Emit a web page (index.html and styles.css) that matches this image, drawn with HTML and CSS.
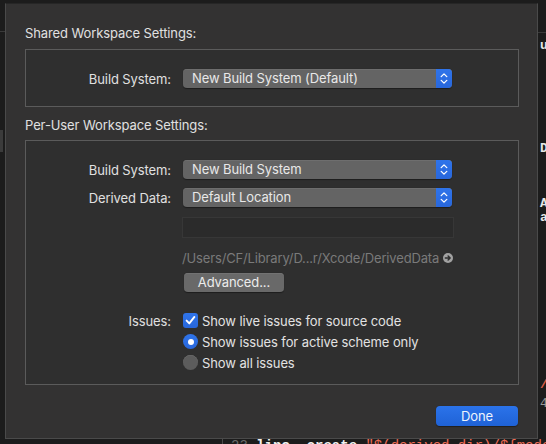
FILE: index.html
```html
<!DOCTYPE html>
<html>
<head>
<meta charset="utf-8">
<link rel="stylesheet" href="styles.css">
</head>
<body>
<div class="backdrop">
  <div class="bd-line bd-line-left"></div>
  <div class="bd-line bd-line-right"></div>
  <div class="bd-block"></div>
  <div class="bd-frag bd-ui">ui</div>
  <div class="bd-frag bd-d">D</div>
  <div class="bd-frag bd-a">A</div>
  <div class="bd-frag bd-a2">a</div>
  <div class="bd-frag bd-slash">/</div>
  <div class="bd-frag bd-four">4</div>
  <div class="bd-code"><span class="c-num">23</span> <span class="c-w">lipo</span> <span class="c-w">-create</span> <span class="c-r">"$(derived_dir)/${model}/</span></div>
</div>

<div class="sheet">
  <div class="title">Shared Workspace Settings:</div>
  <div class="box box-shared">
    <div class="row">
      <div class="label">Build System:</div>
      <div class="popup">
        <span class="popup-text">New Build System (Default)</span>
        <span class="stepper"><svg width="16" height="19" viewBox="0 0 16 19"><path d="M5.2 7.6 L8 4.9 L10.8 7.6 M5.2 11.4 L8 14.1 L10.8 11.4" fill="none" stroke="#fff" stroke-width="1.3" stroke-linecap="round" stroke-linejoin="round"/></svg></span>
      </div>
    </div>
  </div>

  <div class="title title-user">Per-User Workspace Settings:</div>
  <div class="box box-user">
    <div class="row">
      <div class="label">Build System:</div>
      <div class="popup">
        <span class="popup-text">New Build System</span>
        <span class="stepper"><svg width="16" height="19" viewBox="0 0 16 19"><path d="M5.2 7.6 L8 4.9 L10.8 7.6 M5.2 11.4 L8 14.1 L10.8 11.4" fill="none" stroke="#fff" stroke-width="1.3" stroke-linecap="round" stroke-linejoin="round"/></svg></span>
      </div>
    </div>
    <div class="row row-derived">
      <div class="label">Derived Data:</div>
      <div class="popup">
        <span class="popup-text">Default Location</span>
        <span class="stepper"><svg width="16" height="19" viewBox="0 0 16 19"><path d="M5.2 7.6 L8 4.9 L10.8 7.6 M5.2 11.4 L8 14.1 L10.8 11.4" fill="none" stroke="#fff" stroke-width="1.3" stroke-linecap="round" stroke-linejoin="round"/></svg></span>
      </div>
    </div>
    <div class="indent">
      <div class="field"></div>
      <div class="path">
        <span class="path-text">/Users/CF/Library/D...r/Xcode/DerivedData</span>
        <svg class="path-arrow" width="10" height="10" viewBox="0 0 10 10"><circle cx="5" cy="5" r="5" fill="#a2a2a2"/><path d="M2.3 5 H7.2 M5.1 2.9 L7.2 5 L5.1 7.1" fill="none" stroke="#2e2e2e" stroke-width="1.4" stroke-linecap="round" stroke-linejoin="round"/></svg>
      </div>
      <div class="button-adv">Advanced...</div>
    </div>
    <div class="row row-issues">
      <div class="label">Issues:</div>
      <div class="option">
        <span class="checkbox"><svg width="15" height="15" viewBox="0 0 15 15"><path d="M3.6 7.6 L6.3 10.4 L11.4 3.9" fill="none" stroke="#fff" stroke-width="1.9" stroke-linecap="round" stroke-linejoin="round"/></svg></span>
        <span class="opt-text">Show live issues for source code</span>
      </div>
    </div>
    <div class="row row-radio">
      <div class="label"></div>
      <div class="option">
        <span class="radio radio-on"><span class="dot"></span></span>
        <span class="opt-text">Show issues for active scheme only</span>
      </div>
    </div>
    <div class="row row-radio">
      <div class="label"></div>
      <div class="option">
        <span class="radio radio-off"></span>
        <span class="opt-text">Show all issues</span>
      </div>
    </div>
  </div>

  <div class="footer">
    <div class="button-done">Done</div>
  </div>
</div>
</body>
</html>
```

FILE: styles.css
```css
* { box-sizing: border-box; }

html, body {
  margin: 0;
  padding: 0;
}

body {
  width: 546px;
  height: 444px;
  overflow: hidden;
  background: #1c1c1c;
  font-family: "Inter", "Noto Sans", sans-serif;
  font-size: 13px;
  line-height: 16px;
  color: #e0e0e0;
  position: relative;
  padding: 3px 0 0 5px;
}

/* backdrop: the editor behind the sheet */
.backdrop {
  position: absolute;
  left: 0;
  top: 0;
  width: 546px;
  height: 444px;
  z-index: 0;
  overflow: hidden;
}
.bd-line {
  position: absolute;
  height: 1px;
  background: #3a3a3a;
}
.bd-line-left { left: 0; top: 31px; width: 5px; }
.bd-line-right { left: 538px; top: 32px; width: 8px; }
.bd-block {
  position: absolute;
  left: 0;
  top: 130px;
  width: 3px;
  height: 22px;
  background: #3b3b3b;
}
.bd-frag {
  position: absolute;
  font-family: "Liberation Mono", monospace;
  font-size: 13px;
  line-height: 16px;
  color: #e6e6e6;
  font-weight: bold;
}
.bd-ui { left: 540px; top: 38px; }
.bd-d { left: 540px; top: 141px; }
.bd-a { left: 540px; top: 196px; }
.bd-a2 { left: 540px; top: 210px; }
.bd-slash { left: 540px; top: 377px; color: #e0604a; }
.bd-four { left: 540px; top: 396px; color: #9a9a9a; font-weight: normal; }
.bd-code {
  position: absolute;
  left: 222px;
  top: 438px;
  font-family: "Liberation Mono", monospace;
  font-size: 14px;
  line-height: 16px;
  white-space: nowrap;
  border-left: 1px solid #4a4a4a;
  padding-left: 8px;
}
.c-num { color: #6a6a6a; }
.c-w { color: #f0f0f0; font-weight: bold; }
.c-r { color: #ef6b55; }

/* sheet */
.sheet {
  position: relative;
  z-index: 1;
  width: 533px;
  height: 436px;
  background: #333232;
  border: 1px solid #4a4a4a;
  border-top-color: #262626;
  padding: 21px 18px 0 19px;
}

.title {
  height: 16px;
  color: #e0e0e0;
  letter-spacing: -0.1px;
}
.title-user { margin-top: 10px; }

.box {
  margin-top: 8px;
  width: 494px;
  border: 1px solid #5b5b5b;
  background: #2f2f2f;
}
.title-user + .box { margin-top: 7px; }
.box-shared {
  height: 58px;
  padding-top: 19px;
}
.box-user {
  height: 245px;
  padding-top: 19px;
}

.row {
  display: flex;
  align-items: center;
}
.label {
  width: 145px;
  margin-right: 12px;
  text-align: right;
  color: #e0e0e0;
  letter-spacing: -0.1px;
}
.row-derived { margin-top: 9px; }

.popup {
  display: flex;
  width: 269px;
  height: 19px;
  border-radius: 4px;
  background: #646464;
  box-shadow: inset 0 0.5px 0 #787878, 0 0.5px 1px rgba(0,0,0,0.4);
}
.popup-text {
  flex: 1;
  padding-left: 9px;
  line-height: 19px;
  color: #e8e8e8;
  letter-spacing: -0.1px;
  white-space: nowrap;
}
.stepper {
  width: 16px;
  height: 19px;
  border-radius: 0 4px 4px 0;
  background: linear-gradient(#2f74ea, #2867dc);
  display: block;
}
.stepper svg { display: block; }

.indent {
  margin-left: 157px;
}
.field {
  margin-top: 10px;
  margin-left: -1px;
  width: 272px;
  height: 21px;
  background: #2b2b2b;
  border: 1px solid #373737;
}
.path {
  margin-top: 12px;
  margin-left: -1px;
  height: 16px;
  display: flex;
  align-items: center;
  width: 272px;
}
.path-text {
  color: #7a7a7a;
  letter-spacing: -0.15px;
  white-space: nowrap;
}
.path-arrow {
  margin-left: 4px;
  display: block;
}
.button-adv {
  margin-top: 7px;
  margin-left: 1px;
  width: 100px;
  height: 19px;
  border-radius: 4px;
  background: #696969;
  box-shadow: inset 0 0.5px 0 #7c7c7c, 0 0.5px 1px rgba(0,0,0,0.4);
  color: #ececec;
  text-align: center;
  line-height: 19px;
  letter-spacing: -0.1px;
}

.row-issues { margin-top: 18px; height: 21px; }
.row-radio { height: 21px; }

.option {
  display: flex;
  align-items: center;
}
.opt-text {
  margin-left: 4px;
  color: #e2e2e2;
  letter-spacing: -0.1px;
  white-space: nowrap;
}
.checkbox {
  width: 15px;
  height: 15px;
  border-radius: 3px;
  background: linear-gradient(#2f74ea, #2867dc);
  display: block;
}
.checkbox svg { display: block; }
.radio {
  width: 15px;
  height: 15px;
  border-radius: 50%;
  display: flex;
  align-items: center;
  justify-content: center;
}
.radio-on { background: linear-gradient(#2f74ea, #2867dc); }
.radio-on .dot {
  width: 6px;
  height: 6px;
  border-radius: 50%;
  background: #fff;
}
.radio-off {
  background: #5c5c5c;
  box-shadow: inset 0 0.5px 0 #707070;
}

.footer {
  margin-top: 21px;
  display: flex;
  justify-content: flex-end;
  width: 494px;
  padding-right: 1px;
}
.button-done {
  width: 82px;
  height: 20px;
  border-radius: 4px;
  background: linear-gradient(#2b73ea, #1f62d6);
  box-shadow: 0 0.5px 1px rgba(0,0,0,0.4);
  color: #eef3fc;
  text-align: center;
  line-height: 20px;
  letter-spacing: -0.1px;
}
```
